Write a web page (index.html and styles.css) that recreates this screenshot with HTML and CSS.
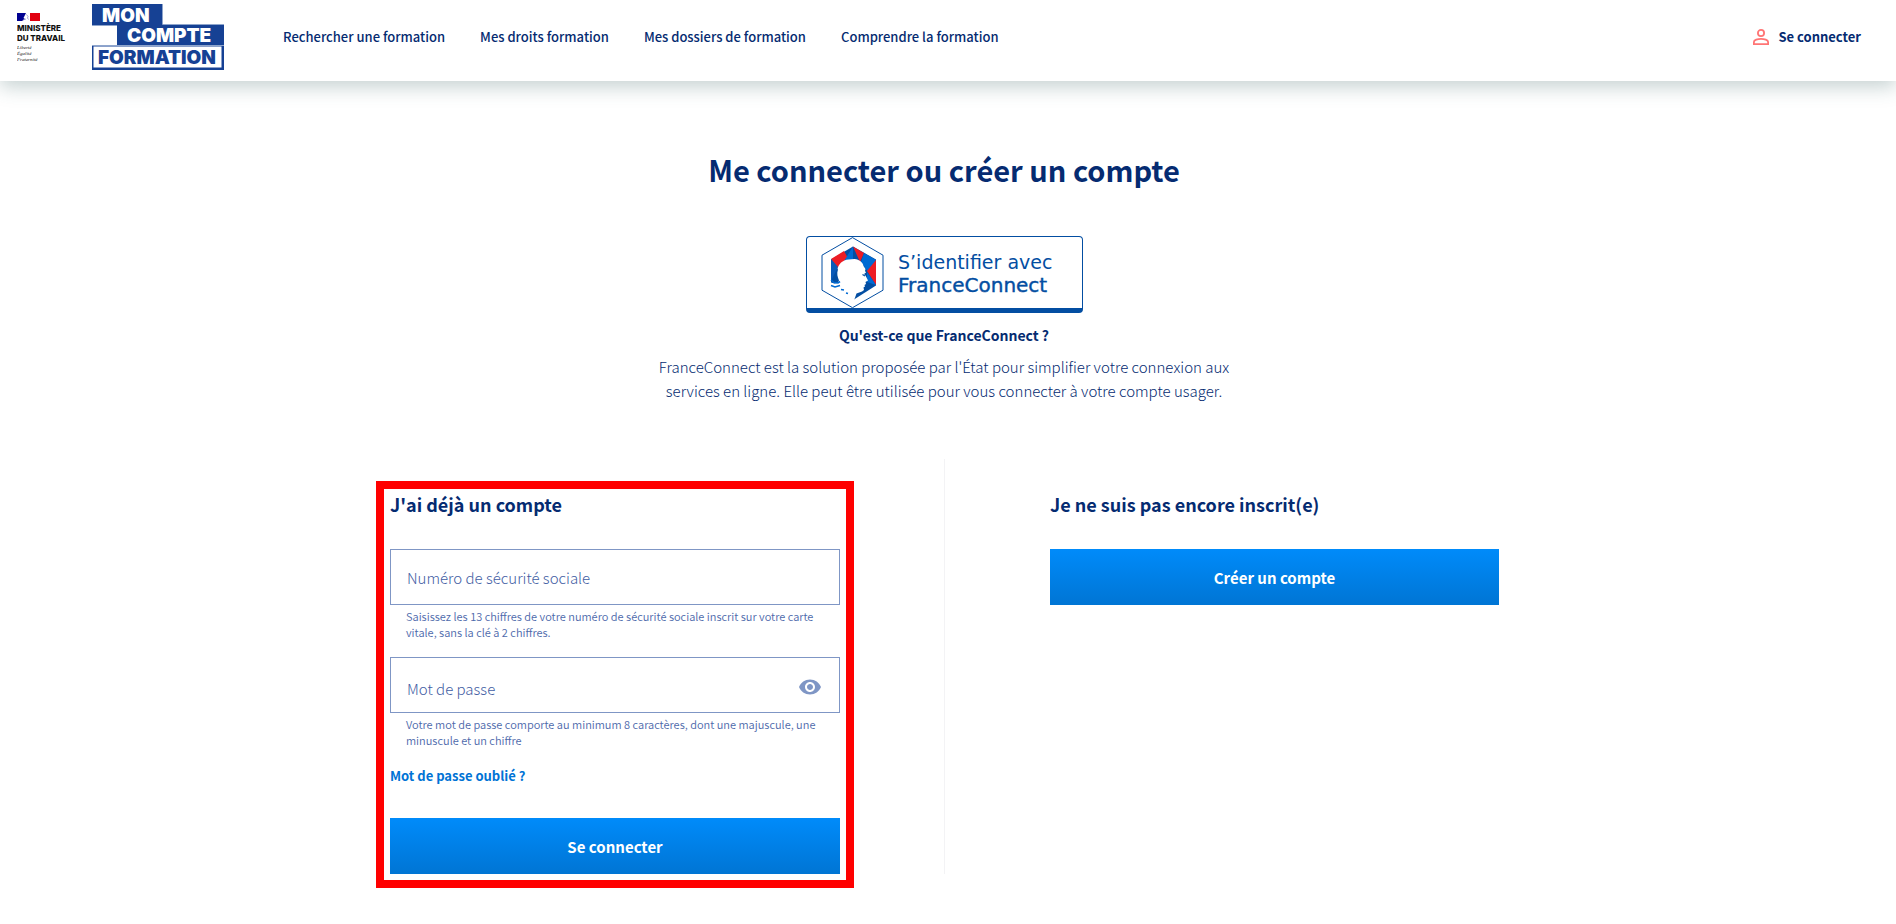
FILE: index.html
```html
<!DOCTYPE html>
<html lang="fr">
<head>
    <meta charset="utf-8">
    <title>Me connecter ou créer un compte - Mon Compte Formation</title>
    <meta name="viewport" content="width=device-width, initial-scale=1">
    <link rel="stylesheet" href="styles.css">
</head>
<body>

<header class="header">
    <a class="logos" href="#">
        <!-- Ministère du Travail -->
        <svg class="logo-ministere" width="60" height="66" viewBox="0 0 60 66" role="img" aria-label="Ministère du Travail">
            <rect x="0" y="9" width="10" height="8" fill="#000091"/>
            <rect x="13" y="9" width="10" height="8" fill="#e1000f"/>
            <path d="M9 9h4v8H5l2-1.500 1-.5-1.500-1 1-2z" fill="#fff"/>
            <path d="M9.500 10.500l1.500 2-.5 1.500 1 1.500M6 16l3-1" fill="none" stroke="#7d7dc4" stroke-width=".7"/>
            <text class="min-name" x="0" y="27">MINISTÈRE</text>
            <text class="min-name" x="0" y="37">DU TRAVAIL</text>
            <text class="min-motto" x="0" y="45">Liberté</text>
            <text class="min-motto" x="0" y="51">Égalité</text>
            <text class="min-motto" x="0" y="57">Fraternité</text>
        </svg>
        <!-- Mon Compte Formation -->
        <svg class="logo-mcf" width="132" height="66" viewBox="0 0 132 66" role="img" aria-label="Mon Compte Formation">
            <path d="M0 0h71v20h61v46H0V41h25V22H0z" fill="#164194"/>
            <path d="M0 21.500h25M70.500 0v20.500H132M0 41.500h132" fill="none" stroke="#8ea5cc" stroke-width="1"/>
            <rect x="1.500" y="42.500" width="128" height="21" fill="#fff"/>
            <text class="mcf-word mcf-light" x="10" y="18">MON</text>
            <text class="mcf-word mcf-light" x="35" y="38">COMPTE</text>
            <text class="mcf-word mcf-dark" x="6" y="60">FORMATION</text>
        </svg>
    </a>
    <nav class="nav">
        <a href="#">Rechercher une formation</a>
        <a href="#">Mes droits formation</a>
        <a href="#">Mes dossiers de formation</a>
        <a href="#">Comprendre la formation</a>
    </nav>
    <a class="login" href="#">
        <svg width="16" height="16" viewBox="0 0 16 16" fill="none" stroke="#ff7575" stroke-width="1.800" aria-hidden="true">
            <circle cx="8" cy="4" r="3.100"/>
            <path d="M.9 15.100v-2.200c0-1.900 3.900-3.100 7.100-3.100s7.100 1.200 7.100 3.100v2.200z"/>
        </svg>
        Se connecter
    </a>
</header>

<main class="main">
    <h1>Me connecter ou créer un compte</h1>

    <section class="fc">
        <button type="button" class="fc-button" aria-label="S'identifier avec FranceConnect">
            <svg width="275" height="71" viewBox="0 0 275 71">
                <path d="M45.500 .6L76 18.200v35L45.500 70.700 15 53.200v-35z" fill="#fff" stroke="#034ea2" stroke-width="1"/>
                <path d="M46 9.500L69 22.500v26L47 62.500 24 48.500v-26z" fill="#034ea2"/>
                <path d="M24 22l13-8 5 9-12 8z" fill="#ed1c24"/>
                <path d="M24 22l7 8-7 14z" fill="#0a5ab8"/>
                <path d="M46 9.500L37 24h9z" fill="#006ad2"/>
                <path d="M46 9.500L57 16l-4 9z" fill="#ed1c24"/>
                <path d="M57 16l12 7-8 12-7-10z" fill="#006ad2"/>
                <path d="M69 23v25l-9-14z" fill="#ed1c24"/>
                <path d="M60 35l9 13-9-3z" fill="#006ad2"/>
                <!-- Marianne -->
                <path d="M30.500 32c1-5 5-9 11-9.500l6-.5c5 .5 8 3 9 7l2 3-.5 2 1 1.500-2 1.500 1.500 1.500L61 43.500 58.500 45l.5 2-1.500 1 .5 1.500-1.500 1 .5 2.500-2 1.500-5.500 2-2.500 7-23-14v-4l3.500 1 3-.5 1.500-2.500c-1.500-3.500-2.500-7-1-11z" fill="#fff"/>
                <path d="M24 43l3 2.500 4 .5 2-1.500M24 48.500l4 1.500 5-1.500M34 52.500l3 .5M39 56l2 .5" fill="none" stroke="#006ad2" stroke-width="1.600"/>
                <path d="M55.500 37.500l2.500 1.500" stroke="#034ea2" stroke-width="1.200"/>
                <text class="fc-text" x="91" y="32">S’identifier avec</text>
                <text class="fc-text fc-strong" x="91" y="55">FranceConnect</text>
            </svg>
        </button>
        <a class="fc-link" href="#">Qu'est-ce que FranceConnect ?</a>
        <p>FranceConnect est la solution proposée par l'État pour simplifier votre connexion aux services en ligne. Elle peut être utilisée pour vous connecter à votre compte usager.</p>
    </section>

    <div class="columns">
        <section class="column">
            <form class="signin">
                <h2>J'ai déjà un compte</h2>

                <div class="field">
                    <input type="text" id="nir" aria-describedby="nir-hint">
                    <label for="nir">Numéro de sécurité sociale</label>
                </div>
                <p class="hint" id="nir-hint">Saisissez les 13 chiffres de votre numéro de sécurité sociale inscrit sur votre carte vitale, sans la clé à 2 chiffres.</p>

                <div class="field field-password">
                    <input type="password" id="password" aria-describedby="password-hint">
                    <label for="password">Mot de passe</label>
                    <button type="button" class="eye" aria-label="Afficher le mot de passe">
                        <svg width="24" height="24" viewBox="0 0 24 24" fill="#7f96c5">
                            <path d="M12 4.500C7 4.500 2.730 7.610 1 12c1.730 4.390 6 7.500 11 7.500s9.270-3.110 11-7.500c-1.730-4.390-6-7.500-11-7.500zM12 17c-2.760 0-5-2.240-5-5s2.240-5 5-5 5 2.240 5 5-2.240 5-5 5zm0-8c-1.660 0-3 1.340-3 3s1.340 3 3 3 3-1.340 3-3-1.340-3-3-3z"/>
                        </svg>
                    </button>
                </div>
                <p class="hint" id="password-hint">Votre mot de passe comporte au minimum 8 caractères, dont une majuscule, une minuscule et un chiffre</p>

                <a class="forgot" href="#">Mot de passe oublié ?</a>
                <button type="submit" class="btn">Se connecter</button>
            </form>
        </section>

        <section class="column column-right">
            <h2>Je ne suis pas encore inscrit(e)</h2>
            <button type="button" class="btn">Créer un compte</button>
        </section>
    </div>
</main>

</body>
</html>
```
FILE: styles.css
```css
* {
    box-sizing: border-box;
}

body {
    margin: 0;
    background: #fff;
    color: #052b71;
    font-family: "Noto Sans CJK SC", "Noto Sans", sans-serif;
    font-size: 14px;
    line-height: 24px;
}

a {
    color: inherit;
    text-decoration: none;
}

button {
    font-family: inherit;
    cursor: pointer;
}

/* header */
.header {
    display: flex;
    align-items: center;
    height: 81px;
    padding: 0 35px 0 17px;
    box-shadow: 0 6px 18px rgba(50, 95, 95, 0.28);
}

.logos {
    display: flex;
    align-items: center;
    align-self: flex-start;
    gap: 15px;
    padding-top: 4px;
}

.min-name {
    font: 800 8px Inter, sans-serif;
    fill: #111;
}

.min-motto {
    font: italic 5px "Liberation Serif", serif;
    fill: #222;
}

.mcf-word {
    font: 900 19px Inter, sans-serif;
}

.mcf-light {
    fill: #fff;
}

.mcf-dark {
    fill: #164194;
}

.nav {
    display: flex;
    gap: 35px;
    margin-left: 59px;
    padding-bottom: 8px;
    font-size: 13px;
    font-weight: 500;
}

.login {
    display: flex;
    align-items: center;
    gap: 9px;
    margin-left: auto;
    padding-bottom: 8px;
    font-size: 13px;
    font-weight: 700;
}

/* content */
.main {
    max-width: 1326px;
    margin: 0 auto;
    padding: 68px 8px 40px 0;
}

h1 {
    margin: 0;
    font-size: 29px;
    font-weight: 700;
    line-height: 40px;
    text-align: center;
}

.fc {
    display: flex;
    flex-direction: column;
    align-items: center;
    margin-top: 47px;
    text-align: center;
}

.fc-button {
    padding: 0;
    border: 1px solid #034ea2;
    border-bottom-width: 5px;
    border-radius: 4px;
    background: #fff;
}

.fc-button svg {
    display: block;
}

.fc-text {
    font: 19px "DejaVu Sans", sans-serif;
    fill: #034ea2;
}

.fc-strong {
    font-size: 20px;
    stroke: #034ea2;
    stroke-width: 0.4;
}

.fc-link {
    margin-top: 10px;
    font-weight: 700;
}

.fc p {
    max-width: 580px;
    margin: 8px 0 0;
    font-size: 15px;
    font-weight: 300;
}

.columns {
    display: grid;
    grid-template-columns: 1fr 1fr;
    margin-top: 56px;
}

.column {
    padding: 36px 104px 0 105px;
}

.column-right {
    border-left: 1px solid #f3f3f5;
}

h2 {
    margin: 0 0 36px;
    font-size: 18px;
    font-weight: 700;
    line-height: 18px;
}

/* frame drawn around the sign in form */
.signin {
    outline: 8px solid #f00;
    outline-offset: 6px;
}

.field {
    display: grid;
    align-items: center;
    height: 56px;
}

.field > * {
    grid-area: 1 / 1;
}

.field input {
    width: 100%;
    height: 56px;
    padding: 0 16px;
    border: 1px solid #7f96c5;
    background: none;
    color: #052b71;
    font: inherit;
}

.field label {
    justify-self: start;
    padding: 2px 0 0 17px;
    color: #3f5da3;
    font-size: 15px;
    font-weight: 300;
    pointer-events: none;
}

.field-password label {
    padding-top: 7px;
}

.eye {
    display: flex;
    justify-self: end;
    margin-right: 18px;
    padding: 4px 0 0;
    border: 0;
    background: none;
}

.hint {
    margin: 3px 0 17px;
    padding: 0 16px;
    color: #4d69ab;
    font-size: 11px;
    font-weight: 350;
    line-height: 16px;
}

.forgot {
    display: block;
    color: #0073d5;
    font-size: 13px;
    font-weight: 700;
    line-height: 22px;
}

.btn {
    width: 100%;
    height: 56px;
    border: 0;
    background: linear-gradient(#008bfa, #0075d4);
    color: #fff;
    font-size: 15px;
    font-weight: 700;
}

.signin .btn {
    margin-top: 31px;
}
```
